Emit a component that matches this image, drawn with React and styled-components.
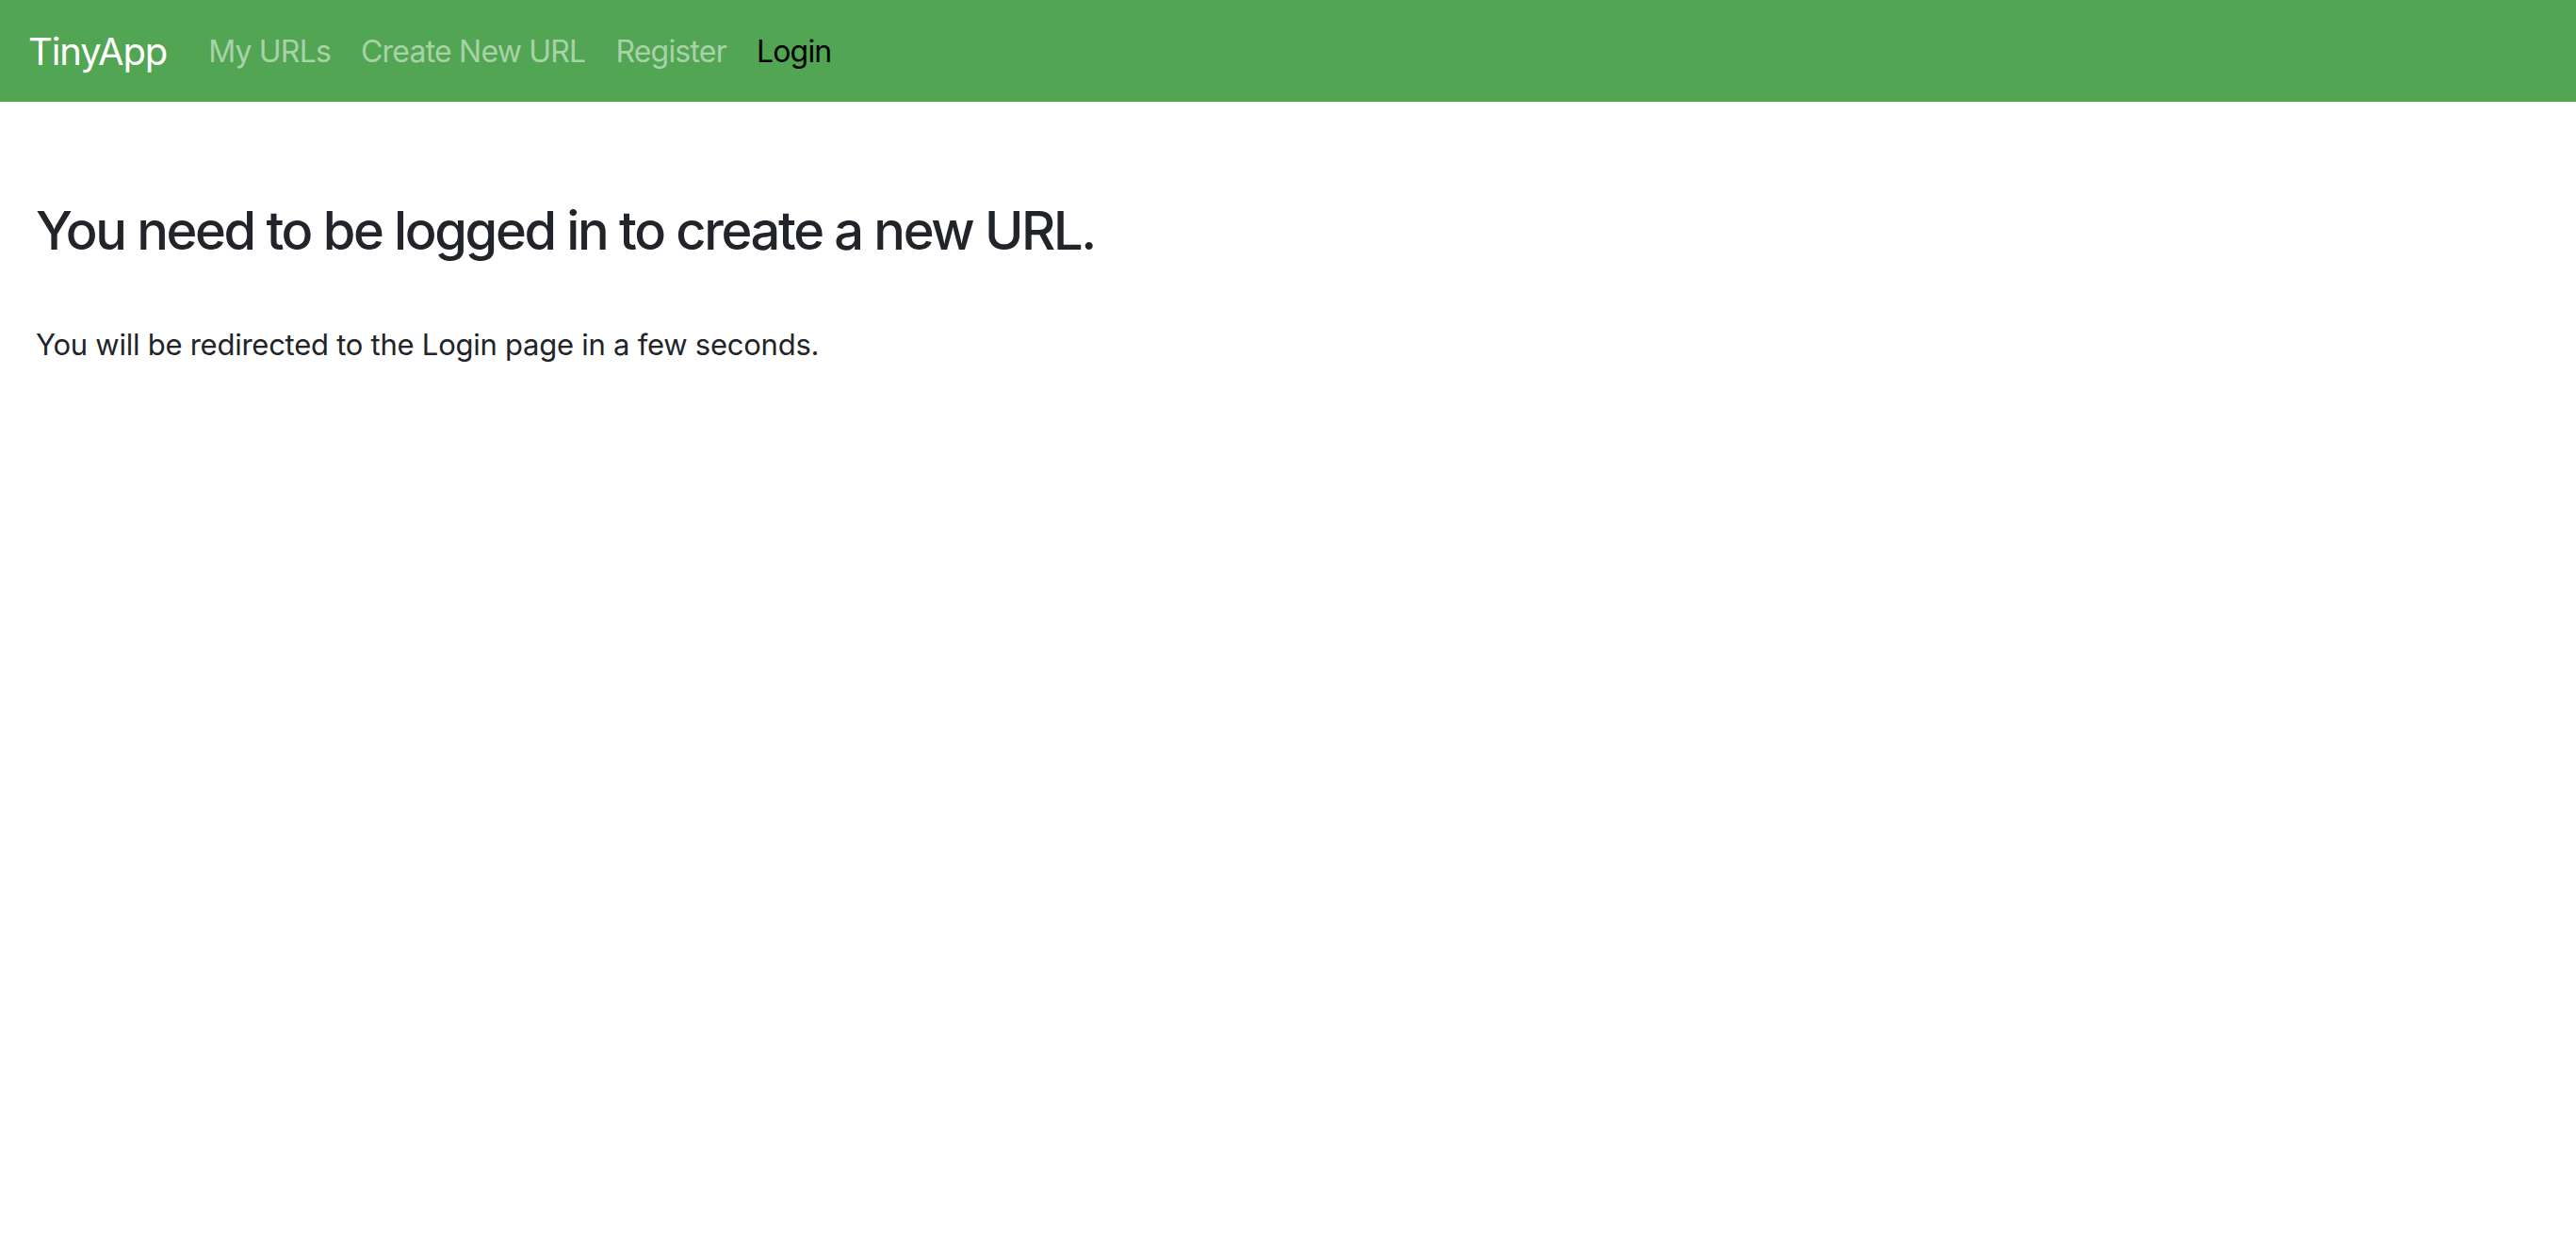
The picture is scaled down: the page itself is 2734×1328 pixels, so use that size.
import styled, { createGlobalStyle } from "styled-components";

const GlobalStyle = createGlobalStyle`
  html, body {
    margin: 0;
    padding: 0;
    background: #fff;
    font-family: Inter, "Liberation Sans", sans-serif;
    color: #212529;
  }
`;

const NavBar = styled.nav`
  display: flex;
  align-items: center;
  height: 108px;
  padding: 0 30px;
  background: #52a552;
  box-sizing: border-box;
`;

const Brand = styled.a`
  font-size: 40px;
  color: #fff;
  text-decoration: none;
  margin-right: 28px;
  letter-spacing: -1.1px;
`;

const NavList = styled.ul`
  display: flex;
  list-style: none;
  margin: 0;
  padding: 0;
`;

const NavLink = styled.a`
  display: block;
  padding: 0 16px;
  font-size: 32px;
  letter-spacing: -0.8px;
  text-decoration: none;
  color: ${(p) => (p.$active ? "#000" : "rgba(255, 255, 255, 0.5)")};
`;

const Main = styled.main`
  padding: 104px 38px 0;
`;

const Title = styled.h3`
  margin: 0 0 64px;
  font-size: 56px;
  font-weight: 500;
  line-height: 1.2;
  letter-spacing: -2.35px;
  color: #212529;
`;

const Note = styled.p`
  margin: 0;
  font-size: 31px;
  line-height: 1.5;
  letter-spacing: -0.25px;
  color: #212529;
`;

export default function App() {
  const links = ["My URLs", "Create New URL", "Register"];
  return (
    <>
      <GlobalStyle />
      <NavBar>
        <Brand href="#">TinyApp</Brand>
        <NavList>
          {links.map((l) => (
            <li key={l}>
              <NavLink href="#">{l}</NavLink>
            </li>
          ))}
          <li>
            <NavLink href="#" $active>
              Login
            </NavLink>
          </li>
        </NavList>
      </NavBar>
      <Main>
        <Title>You need to be logged in to create a new URL.</Title>
        <Note>You will be redirected to the Login page in a few seconds.</Note>
      </Main>
    </>
  );
}
